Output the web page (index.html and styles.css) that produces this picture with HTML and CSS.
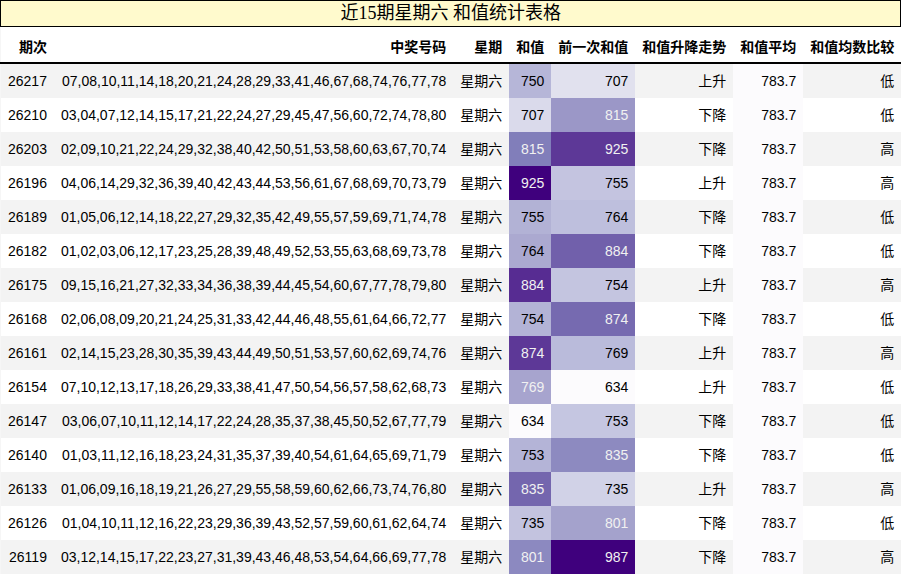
FILE: index.html
```html
<!DOCTYPE html>
<html lang="zh">
<head>
<meta charset="utf-8">
<title>近15期星期六 和值统计表格</title>
<link rel="stylesheet" href="styles.css">
</head>
<body>
<table class="stats">
  <caption class="title">近15期星期六 和值统计表格</caption>
  <thead>
    <tr>
      <th>期次</th><th>中奖号码</th><th>星期</th><th>和值</th><th>前一次和值</th><th>和值升降走势</th><th>和值平均</th><th>和值均数比较</th>
    </tr>
  </thead>
  <tbody>
    <tr><td>26217</td><td>07,08,10,11,14,18,20,21,24,28,29,33,41,46,67,68,74,76,77,78</td><td>星期六</td><td style="background:#b6b6d8">750</td><td style="background:#e1e1ee">707</td><td>上升</td><td class="avg">783.7</td><td>低</td></tr>
    <tr><td>26210</td><td>03,04,07,12,14,15,17,21,22,24,27,29,45,47,56,60,72,74,78,80</td><td>星期六</td><td style="background:#dadaeb">707</td><td class="lt" style="background:#9b97c7">815</td><td>下降</td><td class="avg">783.7</td><td>低</td></tr>
    <tr><td>26203</td><td>02,09,10,21,22,24,29,32,38,40,42,50,51,53,58,60,63,67,70,74</td><td>星期六</td><td class="lt" style="background:#817eba">815</td><td class="lt" style="background:#5d3897">925</td><td>下降</td><td class="avg">783.7</td><td>高</td></tr>
    <tr><td>26196</td><td>04,06,14,29,32,36,39,40,42,43,44,53,56,61,67,68,69,70,73,79</td><td>星期六</td><td class="lt" style="background:#3f007d">925</td><td style="background:#c4c4e0">755</td><td>上升</td><td class="avg">783.7</td><td>高</td></tr>
    <tr><td>26189</td><td>01,05,06,12,14,18,22,27,29,32,35,42,49,55,57,59,69,71,74,78</td><td>星期六</td><td style="background:#b2b2d5">755</td><td style="background:#bebfdd">764</td><td>下降</td><td class="avg">783.7</td><td>低</td></tr>
    <tr><td>26182</td><td>01,02,03,06,12,17,23,25,28,39,48,49,52,53,55,63,68,69,73,78</td><td>星期六</td><td style="background:#aba9d0">764</td><td class="lt" style="background:#7160ab">884</td><td>下降</td><td class="avg">783.7</td><td>低</td></tr>
    <tr><td>26175</td><td>09,15,16,21,27,32,33,34,36,38,39,44,45,54,60,67,77,78,79,80</td><td>星期六</td><td class="lt" style="background:#572c92">884</td><td style="background:#c4c5e0">754</td><td>上升</td><td class="avg">783.7</td><td>高</td></tr>
    <tr><td>26168</td><td>02,06,08,09,20,21,24,25,31,33,42,44,46,48,55,61,64,66,72,77</td><td>星期六</td><td style="background:#b3b3d6">754</td><td class="lt" style="background:#766ab0">874</td><td>下降</td><td class="avg">783.7</td><td>低</td></tr>
    <tr><td>26161</td><td>02,14,15,23,28,30,35,39,43,44,49,50,51,53,57,60,62,69,74,76</td><td>星期六</td><td class="lt" style="background:#5d3897">874</td><td style="background:#babbdb">769</td><td>上升</td><td class="avg">783.7</td><td>高</td></tr>
    <tr><td>26154</td><td>07,10,12,13,17,18,26,29,33,38,41,47,50,54,56,57,58,62,68,73</td><td>星期六</td><td class="lt" style="background:#a7a4ce">769</td><td style="background:#fcfbfd">634</td><td>上升</td><td class="avg">783.7</td><td>低</td></tr>
    <tr><td>26147</td><td>03,06,07,10,11,12,14,17,22,24,28,35,37,38,45,50,52,67,77,79</td><td>星期六</td><td style="background:#fcfbfd">634</td><td style="background:#c5c6e1">753</td><td>下降</td><td class="avg">783.7</td><td>低</td></tr>
    <tr><td>26140</td><td>01,03,11,12,16,18,23,24,31,35,37,39,40,54,61,64,65,69,71,79</td><td>星期六</td><td style="background:#b4b4d7">753</td><td class="lt" style="background:#8d8ac0">835</td><td>下降</td><td class="avg">783.7</td><td>低</td></tr>
    <tr><td>26133</td><td>01,06,09,16,18,19,21,26,27,29,55,58,59,60,62,66,73,74,76,80</td><td>星期六</td><td class="lt" style="background:#7466ae">835</td><td style="background:#d1d2e7">735</td><td>上升</td><td class="avg">783.7</td><td>高</td></tr>
    <tr><td>26126</td><td>01,04,10,11,12,16,22,23,29,36,39,43,52,57,59,60,61,62,64,74</td><td>星期六</td><td style="background:#c3c3df">735</td><td class="lt" style="background:#a4a2cc">801</td><td>下降</td><td class="avg">783.7</td><td>低</td></tr>
    <tr><td>26119</td><td>03,12,14,15,17,22,23,27,31,39,43,46,48,53,54,64,66,69,77,78</td><td>星期六</td><td class="lt" style="background:#8c89c0">801</td><td class="lt" style="background:#3f007d">987</td><td>下降</td><td class="avg">783.7</td><td>高</td></tr>
  </tbody>
</table>
</body>
</html>
```
FILE: styles.css
```css
body {
  margin: 0;
  font-family: "Liberation Sans", "Noto Sans CJK SC", sans-serif;
  font-size: 14px;
  color: #000;
  background: #fff;
}

.stats {
  border-collapse: collapse;
  border-spacing: 0;
  border-left: 1px solid #f6f6f6;
}

.title {
  border: 1px solid #000;
  background: #fffacd;
  font-family: "Liberation Serif", "Noto Sans CJK SC", serif;
  font-size: 18px;
  line-height: 25px;
  text-align: center;
}

.stats th {
  font-weight: bold;
  text-align: right;
  padding: 10px 7px 5px;
  line-height: 20px;
  border-bottom: 2px solid #000;
  white-space: nowrap;
}

.stats td {
  text-align: right;
  padding: 7px;
  line-height: 20px;
  white-space: nowrap;
}

.stats tbody tr:nth-child(odd) {
  background: #f3f3f3;
}

.stats td.avg {
  background: #fcfbfd;
}

.stats td.lt {
  color: #f1f1f1;
}
```
